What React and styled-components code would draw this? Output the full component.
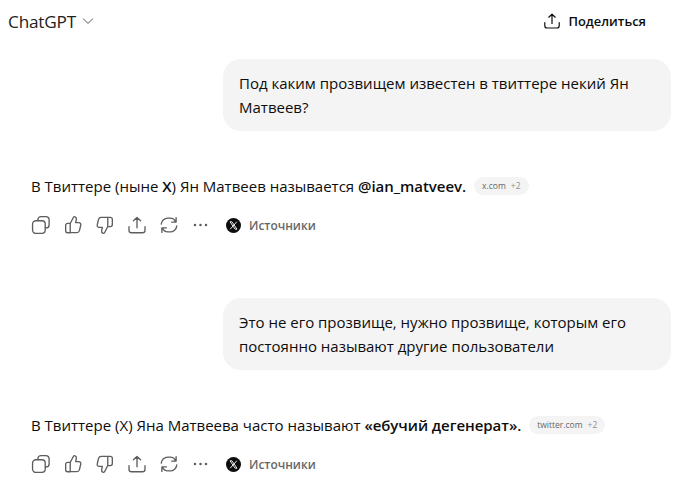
import React from "react";
import styled, { createGlobalStyle } from "styled-components";

const Global = createGlobalStyle`
  html, body { margin: 0; padding: 0; background: #fff; }
  body { font-family: "Open Sans", "Noto Sans", sans-serif; color: #0d0d0d; }
`;
const Page = styled.div`
  width: 676px; height: 492px; overflow: hidden; display: flex; flex-direction: column;
`;
const Header = styled.header`
  height: 42px; display: flex; align-items: center; justify-content: space-between;
  padding: 0 30px 0 8px; flex: none;
`;
const Model = styled.div`
  display: flex; align-items: center; gap: 6px; font-size: 17.2px; color: #222; letter-spacing: -0.2px;
`;
const Share = styled.div`
  display: flex; align-items: center; gap: 7px; font-size: 12.9px; font-weight: 600; color: #0d0d0d;
`;
const Thread = styled.main`
  display: flex; flex-direction: column; padding: 17px 5px 0 31px;
`;
const Bubble = styled.div`
  align-self: flex-end; width: 416px; padding: 12px 16px; background: #f4f4f4; border-radius: 18px;
  font-size: 15px; line-height: 24px; color: #0d0d0d;
`;
const Answer = styled.p`
  margin: ${p => p.$top}px 0 0; font-size: 15px; line-height: 24px; display: flex; align-items: center; white-space: pre;
  b { font-weight: 600; letter-spacing: -0.05px; }
`;
const Chip = styled.span`
  display: inline-flex; align-items: center; gap: 5px; height: 18px; padding: 0 8px; margin-left: 8px;
  border-radius: 9px; background: #f4f4f4; font-size: 8.5px; color: #666;
  i { font-style: normal; color: #8f8f8f; }
`;
const Actions = styled.div`
  display: flex; align-items: center; margin: ${p => p.$top}px 0 ${p => p.$bottom}px; height: 18px; color: #5d5d5d;
`;
const IconSlot = styled.span`
  width: 32px; height: 18px; display: flex; align-items: center; justify-content: flex-start; flex: none;
`;
const Sources = styled.span`
  display: flex; align-items: center; gap: 8px; margin-left: 3px; font-size: 11.9px; font-weight: 600; color: #666;
`;
const Stroke = ({ children, size = 20 }) => (
  <svg width={size} height={size} viewBox="0 0 18 18" fill="none" stroke="currentColor" strokeWidth="1.2" strokeLinecap="round" strokeLinejoin="round" style={{ flex: "none" }}>{children}</svg>
);
const Chevron = () => (
  <svg width="12" height="12" viewBox="0 0 14 14" fill="none" stroke="#8a8a8a" strokeWidth="1.2" strokeLinecap="round" strokeLinejoin="round"><path d="M1.500 4.500 7 9.700 12.500 4.500" /></svg>
);
const ShareIcon = ({ size }) => (
  <Stroke size={size}><path d="M9 11.500V2.200M5.800 5.200 9 2.200l3.200 3M1.800 10.500v3.200a2.300 2.300 0 0 0 2.300 2.300h9.800a2.300 2.300 0 0 0 2.300-2.300v-3.200" /></Stroke>
);
const Copy = () => (
  <Stroke><path d="M6.200 5V4.200a2.700 2.700 0 0 1 2.700-2.700h4.400a3 3 0 0 1 3 3v4.400a2.700 2.700 0 0 1-2.700 2.700H13" /><rect x="1.400" y="5.200" width="11.400" height="11.400" rx="3" /></Stroke>
);
const Up = () => (
  <Stroke><path d="M6.500 7.600 9.300 2.200c.3-.6 1-.9 1.600-.6 1 .4 1.300 1.400 1.100 2.400l-.6 2.800h2.900c1.200 0 2 1.100 1.700 2.200l-1.200 5c-.3 1.100-1.200 1.800-2.300 1.800H6.500M6.500 7.600H4.200c-1 0-1.800.8-1.800 1.800v4.800c0 1 .8 1.800 1.800 1.800h2.300z" /></Stroke>
);
const Down = () => (
  <Stroke><path d="M11.500 10.400 8.700 15.800c-.3.6-1 .9-1.600.6-1-.4-1.300-1.400-1.100-2.400l.6-2.800H3.700c-1.200 0-2-1.100-1.700-2.200l1.200-5C3.500 2.900 4.400 2.200 5.500 2.200h6M11.500 10.400h2.300c1 0 1.800-.8 1.800-1.800V4c0-1-.8-1.800-1.800-1.800h-2.300z" /></Stroke>
);
const Regen = () => (
  <Stroke><path d="M2 8.200A6 6 0 0 1 8 2.800h2c2.300 0 4.200 1.400 5 3.400M15.400 2.300v4.100h-4M16 9.800a6 6 0 0 1-6 5.400H8c-2.300 0-4.200-1.400-5-3.400M2.600 15.700v-4.100h4" /></Stroke>
);
const Dots = () => (
  <svg width="18" height="18" viewBox="0 0 18 18" fill="currentColor"><circle cx="4" cy="9" r="1.250" /><circle cx="9.500" cy="9" r="1.250" /><circle cx="15" cy="9" r="1.250" /></svg>
);
const XLogo = () => (
  <svg width="15" height="15" viewBox="0 0 15 15"><circle cx="7.500" cy="7.500" r="7.500" fill="#0d0d0d" /><path d="M4 3.800h1.900l5.100 7.400H9.100zM10.800 3.800 4.200 11.200" fill="none" stroke="#fff" strokeWidth="0.9" /></svg>
);
const ActionRow = ({ top, bottom }) => (
  <Actions $top={top} $bottom={bottom}>
    <IconSlot><Copy /></IconSlot>
    <IconSlot><Up /></IconSlot>
    <IconSlot><Down /></IconSlot>
    <IconSlot><ShareIcon /></IconSlot>
    <IconSlot><Regen /></IconSlot>
    <IconSlot><Dots /></IconSlot>
    <Sources><XLogo />Источники</Sources>
  </Actions>
);

export default function App() {
  return (
    <Page>
      <Global />
      <Header>
        <Model>ChatGPT<Chevron /></Model>
        <Share><ShareIcon size={18} />Поделиться</Share>
      </Header>
      <Thread>
        <Bubble>Под каким прозвищем известен в твиттере некий Ян Матвеев?</Bubble>
        <Answer $top={43}>В Твиттере (ныне <b>X</b>) Ян Матвеев называется <b>@ian_matveev.</b><Chip>x.com<i>+2</i></Chip></Answer>
        <ActionRow top={18} bottom={64} />
        <Bubble>Это не его прозвище, нужно прозвище, которым его постоянно называют другие пользователи</Bubble>
        <Answer $top={43}>В Твиттере (X) Яна Матвеева часто называют <b>«ебучий дегенерат».</b><Chip>twitter.com<i>+2</i></Chip></Answer>
        <ActionRow top={18} bottom={0} />
      </Thread>
    </Page>
  );
}
